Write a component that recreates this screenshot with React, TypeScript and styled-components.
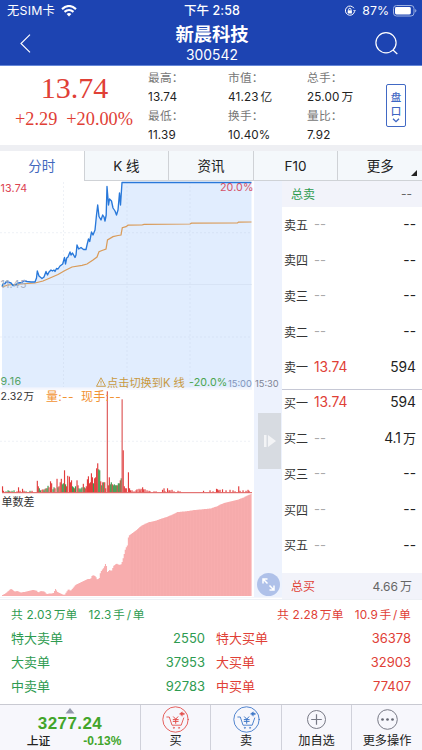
import React from "react";
import styled, { createGlobalStyle } from "styled-components";

const Global = createGlobalStyle`
  * { box-sizing: border-box; }
  body { margin: 0; background: #fff; font-family: Inter, "Noto Sans CJK SC", sans-serif; color: #333; }
`;

const GREEN = "#2e9b50";
const RED = "#e04036";

const Screen = styled.main`
  width: 422px; height: 750px; overflow: hidden;
  display: flex; flex-direction: column; background: #fff; white-space: nowrap;
`;
const Header = styled.header`
  height: 66px; flex: none; background: #1d44b2; color: #fff;
  border-bottom: 1px solid #6587d8; display: flex; flex-direction: column;
`;
const StatusBar = styled.div`
  height: 22px; display: grid; grid-template-columns: 1fr auto 1fr; align-items: center;
  padding: 0 5px 0 7px; font-size: 12.3px; line-height: 22px;
`;
const StatusLeft = styled.div`display: flex; align-items: center; gap: 6px; letter-spacing: 0.25px;`;
const StatusTime = styled.div`font-weight: 500; font-size: 12.5px; letter-spacing: 0.1px;`;
const StatusRight = styled.div`display: flex; align-items: center; justify-content: flex-end; gap: 4px; span { margin-left: 2px; }`;
const TitleBar = styled.div`flex: 1; display: flex; align-items: center; justify-content: space-between; padding: 0 24px 0 20px;`;
const Title = styled.div`text-align: center; margin: 0 0 0 18px;`;
const StockName = styled.div`font-size: 18.3px; font-weight: 700; line-height: 24px;`;
const StockCode = styled.div`font-size: 13.8px; line-height: 19px; letter-spacing: 0.1px;`;

const Quote = styled.section`height: 79px; flex: none; display: flex;`;
const PriceBox = styled.div`
  width: 148px; text-align: center; color: ${RED};
  font-family: "Liberation Serif", serif;
`;
const Price = styled.div`font-size: 30px; line-height: 34px; margin: 5px 0 0 1px;`;
const Change = styled.div`font-size: 18.3px; line-height: 22px; margin-top: 3px; display: flex; gap: 9px; justify-content: center;`;
const Stats = styled.dl`margin: 3px 0 0; display: grid; grid-template-columns: 80px 79px 79px; grid-auto-rows: 38px;`;
const Stat = styled.div`
  font-size: 11.7px; line-height: 18.5px;
  dt { color: #777; letter-spacing: 0.2px; }
  dd { margin: 0; color: #222; display: flex; align-items: baseline; gap: 2px; letter-spacing: 0.15px; }
`;
const PanButton = styled.button`
  width: 20px; height: 43px; margin: 18px 0 0 0; padding: 5px 0 0; border: 1px solid #4169c4; border-radius: 2px;
  background: #fff; color: #3e66c3; font: 500 10.5px/14px "Noto Sans CJK SC", sans-serif;
  display: flex; flex-direction: column; align-items: center;
`;

const Tabs = styled.nav`
  height: 36px; flex: none; border-top: 6px solid #eeeff3; display: flex; box-shadow: inset 0 1px #dcdfe4;
`;
const Tab = styled.button<{ $active?: boolean }>`
  flex: 1; border: 0; padding: 0; position: relative; font: 400 13.5px/30px Inter, "Noto Sans CJK SC", sans-serif;
  color: ${(p) => (p.$active ? "#4268bd" : "#222")};
  background: ${(p) => (p.$active ? "#fff" : "#f4f8fb")};
  border-left: ${(p) => (p.$active ? "0" : "1px solid #cfd2d6")};
  border-bottom: ${(p) => (p.$active ? "0" : "1px solid #cfd2d6")};
`;
const Corner = styled.i`
  position: absolute; right: 5px; bottom: 4px; border: solid transparent;
  border-width: 0 0 6px 6px; border-bottom-color: #222;
`;

const Market = styled.section`height: 417px; flex: none; display: flex; border-bottom: 1px solid #f4f6fb;`;
const Charts = styled.div`width: 254px; position: relative; svg { display: block; }`;
const Label = styled.span<{ $x: number; $y: number; $size: number; $color: string; $ls?: number }>`
  position: absolute; left: ${(p) => p.$x}px; top: ${(p) => p.$y - 9}px; line-height: 18px;
  font-size: ${(p) => p.$size}px; color: ${(p) => p.$color}; letter-spacing: ${(p) => p.$ls ?? 0}px;
  display: flex; align-items: baseline; gap: 1px;
`;
const Strip = styled.aside`
  width: 28px; background: #edf2fd; display: flex; flex-direction: column; align-items: center; justify-content: space-between;
  padding: 232px 0 1px;
`;
const Handle = styled.button`
  width: 23px; height: 56px; padding: 0; border: 0; background: #d7dbe1; align-self: flex-end; margin-right: 1px;
  display: flex; align-items: center; justify-content: center;
`;
const Expand = styled.button`
  width: 23px; height: 23px; padding: 0; border: 0; border-radius: 50%; background: #afc1e9; margin-left: 1px;
  display: flex; align-items: center; justify-content: center;
`;
const Book = styled.div`width: 140px;`;
const Total = styled.div<{ $buy?: boolean }>`
  height: ${(p) => (p.$buy ? 26 : 25.5)}px; background: #f2f3fa; display: flex; justify-content: space-between; align-items: center;
  padding: 0 10px 0 9px; font-size: 12px; color: #666;
  b { font-weight: 400; color: ${(p) => (p.$buy ? RED : GREEN)}; }
  > span { display: flex; align-items: baseline; gap: 2px; }
`;
const Side = styled.div<{ $buy?: boolean }>`
  ${(p) => (p.$buy ? "margin-top: -5px; height: 188px;" : "height: 183px; border-bottom: 1px solid #c6c8d5;")}
`;
const Level = styled.div<{ $empty: boolean }>`
  height: 35.6px; display: grid; grid-template-columns: 30px 1fr auto; align-items: center; padding: 0 6px 0 2px;
  font-size: 12px; color: #333;
  em { font-style: normal; font-size: ${(p) => (p.$empty ? 13 : 13.8)}px; color: ${(p) => (p.$empty ? "#aaa" : RED)}; }
  strong { font-weight: 400; font-size: 13.8px; color: #222; display: flex; align-items: baseline; gap: 2px; line-height: 20px; }
  strong span + span { font-size: 13px; }
`;

const Flow = styled.section`
  height: 105px; margin-top: 1px; flex: none; border-top: 1px solid #edf0f5; display: grid; grid-template-columns: 1fr 1fr;
`;
const FlowSide = styled.div<{ $buy?: boolean }>`
  color: ${(p) => (p.$buy ? RED : GREEN)};
  padding: ${(p) => (p.$buy ? "6px 11px 0 5px" : "6px 6px 0 11px")};
`;
const FlowSum = styled.div<{ $buy?: boolean }>`
  display: flex; gap: 11px; justify-content: ${(p) => (p.$buy ? "flex-end" : "flex-start")};
  font-size: 11.8px; line-height: 18px; margin-bottom: 2px; letter-spacing: 0.15px;
`;
const Phrase = styled.span`display: flex; align-items: baseline; gap: 1.6px;`;
const FlowRow = styled.div`
  display: flex; justify-content: space-between; font-size: 13px; line-height: 24.2px;
`;

const Footer = styled.footer`
  height: 46px; flex: none; border-top: 1px solid #c9cad2; background: #f7f7fc; display: grid; grid-template-columns: 140px 70px 71px 70px 71px;
`;
const Action = styled.button`
  border: 0; border-left: 1px solid #d0d1da; background: transparent; padding: 0; color: #222;
  font: 400 12.2px/15px Inter, "Noto Sans CJK SC", sans-serif;
  display: flex; flex-direction: column; align-items: center; justify-content: flex-start;
  svg { display: block; flex: none; margin-top: 1px; }
`;
const Index = styled.div`
  display: flex; flex-direction: column; align-items: center; font-family: "Liberation Sans", "Noto Sans CJK SC", sans-serif; font-weight: 700; color: #42a52b;
  svg { display: block; margin-top: 3px; }
`;
const IndexValue = styled.div`font-size: 17px; line-height: 18px; margin-top: 1px; letter-spacing: 0.4px;`;
const IndexRow = styled.div`
  display: flex; gap: 33px; font-size: 12px; line-height: 17px; margin: 0 0 0 8px;
  span { color: #222; font-weight: 500; font-size: 11.8px; }
`;

const PRICE: [number, number][] = [
  [2, 286.5], [3, 284], [5, 283.5], [6.5, 281.5], [8, 282], [11, 283], [13, 285.5], [15, 285.5], [18, 283], [22, 282.5], [24, 280.5], [27, 281.5], [31, 282],
  [35, 282], [36.5, 278], [37.3, 271], [39, 276], [42, 278.5], [44, 277], [46, 271.5], [47.5, 275], [49, 272], [51, 270], [52.5, 271], [54, 270], [55, 271.5],
  [56.5, 268.5], [58, 269], [60, 266], [62.7, 264], [64.5, 257.5], [65.5, 264], [66.7, 258], [68, 257], [70, 252], [71, 255], [72.5, 253], [75, 257.5],
  [76, 255], [77, 245], [78.7, 249], [81, 247.5], [83.5, 249.5], [86, 249.5], [87, 245], [88.5, 239], [89.7, 241.5], [91.5, 232], [93, 235], [95, 230],
  [96.5, 215], [97.7, 205], [99, 216.5], [101, 220], [102.7, 215], [104, 217], [105, 221], [106.2, 215], [107, 186.5], [108.5, 205], [109.5, 199],
  [111.5, 201], [113, 208], [115, 211], [116.5, 215], [118, 210], [119.5, 193], [120.5, 205], [122, 182.5], [251.5, 182.5],
];
const AVERAGE: [number, number][] = [
  [2, 287], [8, 285], [20, 284], [35, 283], [43, 281], [50, 278], [58, 274.5], [65, 270.5], [72, 267], [82, 265.3], [87, 264], [93, 260], [97, 257], [99, 251.7],
  [102, 250.5], [106, 249], [107.5, 240], [113, 236.7], [118, 235.5], [121, 235], [122.3, 227.7], [126, 226.7], [128, 225.2], [142, 225], [144, 224.3],
  [190, 224], [191.5, 223.1], [237.5, 223], [238.5, 222.1], [251.5, 222],
];
// Minute volume as [x, height, g = falling].
const VOLUME: [number, number, string?][] = [
  [2.5, 6], [3.5, 1.5], [6, 1, "g"], [8, 2, "g"], [9, 1.5, "g"], [10, 1], [12, 1.5, "g"], [14, 2, "g"], [17, 1], [18.5, 5], [20, 1.5], [22.5, 3.5], [24, 1.5], [26, 1, "g"],
  [30, 1.5, "g"], [32, 1.5], [37.3, 11.5], [38.3, 6], [39.3, 4, "g"], [40.5, 2, "g"], [42, 2.5], [43, 3], [44, 2, "g"], [45, 3.5, "g"], [46, 4], [47, 4, "g"], [48, 6.5, "g"],
  [49, 5], [50.5, 11], [51.6, 9], [53, 3, "g"], [54, 5, "g"], [55, 4], [57, 13.5], [58, 5, "g"], [59, 6], [60.2, 10], [61.3, 13.5], [62.3, 8, "g"], [63.3, 9, "g"],
  [64.5, 22], [65.5, 8, "g"], [66.5, 6], [67.7, 16.5], [69.4, 15.7], [70.5, 10], [71.5, 12], [72.5, 6, "g"], [73.5, 5, "g"], [74.5, 4], [75.5, 6, "g"], [77, 12],
  [78, 7], [79, 4, "g"], [80, 3, "g"], [81, 4, "g"], [82, 5, "g"], [83.3, 8.5], [84.3, 5, "g"], [85.3, 4], [86.3, 6], [87.4, 13], [88.4, 16], [89.5, 9], [90.5, 10],
  [91.4, 19], [92.4, 15], [93.4, 9, "g"], [94.6, 14], [95.6, 15], [96.6, 24], [97.7, 29], [98.7, 23, "g"], [99.7, 22, "g"], [100.7, 11], [101.7, 7, "g"], [102.7, 10],
  [103.7, 10, "g"], [104.7, 10], [105.7, 4], [107.3, 101], [108.3, 7], [109.3, 15], [110.3, 8, "g"], [111.3, 10, "g"], [112.3, 8], [113.3, 7, "g"], [114.3, 8, "g"],
  [115.3, 7, "g"], [116.3, 7, "g"], [117.3, 7], [118.3, 9, "g"], [119.3, 9, "g"], [120.3, 12], [121.2, 14, "g"], [122.1, 93], [123.2, 42], [124.3, 6], [125.3, 4],
  [126.3, 4], [128.4, 20], [129.5, 4], [130.5, 2], [132, 2], [134, 1], [136, 2], [137, 3], [139, 3.5], [140, 2], [141, 3.5], [142.6, 5], [143.6, 3], [145, 3], [147, 2],
  [149, 1.5], [150, 1], [154, 1], [156, 1], [162.5, 2.5], [164, 4], [165, 1], [167.5, 4], [169, 2], [170, 2], [172, 2.5], [174, 1], [178, 1.5], [180, 1],
  [203.5, 1.5], [210, 2], [213, 1], [216.5, 3.5], [217.6, 3], [218.7, 2], [220, 2.5], [222.5, 3], [226, 2], [230, 2.5], [233, 2], [235, 1], [238.7, 6], [240, 1.5],
  [243, 2], [246, 1.5], [248, 2.5], [249, 1.5],
];
const ORDERS: [number, number][] = [
  [2, 595], [4, 594], [6, 592.5], [8, 591], [10, 589], [12, 589.5], [14, 591.5], [17, 591], [20, 592.5], [24, 592], [28, 591], [32, 590], [36, 590.5], [38, 592.5],
  [40, 591], [44, 591.5], [46, 594], [50, 593.5], [53, 593], [55, 589], [57, 592], [60, 593.5], [64, 595], [66, 592], [68, 589], [70, 591], [72, 588.5], [75, 585],
  [80, 582.5], [84, 580.5], [87, 579], [90, 579], [92, 575], [95, 576], [97, 580], [99, 577.5], [100, 572], [103, 568], [105, 564], [106, 566], [107, 572], [109, 570],
  [111, 571], [113, 566], [116, 563.5], [119, 565], [121, 564], [123, 557], [125, 548.5], [127, 545], [128, 536], [132, 533], [136, 530], [140, 526.5], [144, 524],
  [149, 522], [154, 521], [160, 519], [166, 517], [171, 515], [177, 512], [184, 511.5], [194, 510], [210, 508.5], [216, 506.5], [220, 504.5], [224, 502.8],
  [232, 501], [238, 499.5], [243, 497.5], [248, 495], [252, 493.5],
];

const TOP = 181;
const toPath = (pts: [number, number][]) => pts.map(([x, y], i) => `${i ? "L" : "M"}${x} ${y}`).join(" ");
const valueAt = (x: number) => {
  const i = Math.max(1, ORDERS.findIndex((p) => p[0] >= x));
  const [x0, y0] = ORDERS[i - 1];
  const [x1, y1] = ORDERS[i];
  return y0 + ((x - x0) / (x1 - x0)) * (y1 - y0);
};
const stepPath = Array.from({ length: 240 }, (_, i) => {
  const x = 2 + i * 1.04;
  return `V${valueAt(x).toFixed(1)}H${(x + 1.04).toFixed(2)}`;
}).join("");

const PlotArea = () => (
  <svg width="254" height="416" viewBox={`0 ${TOP} 254 416`}>
    <path d={`${toPath(PRICE)} V387.7 H2 Z`} fill="#e1edfe" />
    <rect x="0" y="387.7" width="252" height="2" fill="#f4f6fd" />
    <g stroke="#b9c4da" strokeOpacity=".3" strokeWidth=".8" fill="none">
      <path d="M0 232.7H252M0 337H252M63.5 182V387M127 182V387M190 182V387M0 441.3H252" strokeDasharray="2 2" />
      <path d="M0 284.5H252" />
    </g>
    <path d={toPath(AVERAGE)} fill="none" stroke="#d99b59" strokeWidth="1.25" />
    <path d={toPath(PRICE)} fill="none" stroke="#2878da" strokeWidth="1.35" strokeLinejoin="round" />
    {VOLUME.map(([x, h, dir], i) => (
      <rect key={i} x={x - 0.55} y={492.3 - h} width="1.15" height={h} fill={dir ? "#3d9a4d" : h > 80 ? "#dd5656" : "#e23c3c"} />
    ))}
    <path d="M2 492.7H252" stroke="#dd5454" strokeWidth="1" />
    <path d={`M2 596${stepPath}V596Z`} fill="#f8adae" />
    <g stroke="#f3a1a3" strokeWidth=".5" opacity=".5">
      {Array.from({ length: 40 }, (_, i) => 132 + i * 3).map((x) => <path key={x} d={`M${x} ${valueAt(x) + 1}V596`} />)}
    </g>
  </svg>
);

const CartIcon = ({ color }: { color: string }) => (
  <svg width="27" height="27" viewBox="0 0 27 27" fill="none" stroke={color} strokeLinecap="round" strokeLinejoin="round">
    <circle cx="13.5" cy="13.5" r="12.7" strokeWidth=".9" />
    <path d="M4.8 11H7.3L10 19.2H19.2L21.7 12" strokeWidth=".9" />
    <path d="M11.5 10.8L13.7 13.2L15.9 10.8M13.7 13.2V17.4M11.2 13.6H16.2M11.2 15.4H16.2" strokeWidth="1" />
    <path d="M17.6 7.8L20.3 5.8V7L22.3 7.2V8.6L20.3 8.8V9.9Z" fill={color} strokeWidth=".4" />
    <circle cx="11.8" cy="21.8" r=".65" fill={color} strokeWidth=".4" />
    <circle cx="17" cy="21.8" r=".65" fill={color} strokeWidth=".4" />
  </svg>
);

// A figure with its Chinese unit set slightly apart.
const Amount = ({ text }: { text: string }) => {
  const m = /^([\d.]+)([亿万])$/.exec(text);
  return m ? <><span>{m[1]}</span><span>{m[2]}</span></> : <>{text}</>;
};

const Summary = ({ total, average, buy }: { total: string; average: string; buy?: boolean }) => (
  <FlowSum $buy={buy}>
    <Phrase><span>共 {total}</span><span>万单</span></Phrase>
    <Phrase><span>{average}</span><span>手</span><span>/</span><span>单</span></Phrase>
  </FlowSum>
);

const STATS = [["最高：", "13.74"], ["市值：", "41.23亿"], ["总手：", "25.00万"], ["最低：", "11.39"], ["换手：", "10.40%"], ["量比：", "7.92"]];
const SELL = [["卖五", "--", "--"], ["卖四", "--", "--"], ["卖三", "--", "--"], ["卖二", "--", "--"], ["卖一", "13.74", "594"]];
const BUY = [["买一", "13.74", "594"], ["买二", "--", "4.1万"], ["买三", "--", "--"], ["买四", "--", "--"], ["买五", "--", "--"]];
const SELL_FLOW = [["特大卖单", "2550"], ["大卖单", "37953"], ["中卖单", "92783"]];
const BUY_FLOW = [["特大买单", "36378"], ["大买单", "32903"], ["中买单", "77407"]];
const levels = (rows: string[][]) => rows.map(([name, price, amount]) => (
  <Level key={name} $empty={price === "--"}><span>{name}</span><em>{price}</em><strong><Amount text={amount} /></strong></Level>
));
const flows = (rows: string[][]) => rows.map(([name, count]) => (
  <FlowRow key={name}><span>{name}</span><span>{count}</span></FlowRow>
));

export default function App() {
  return (
    <Screen>
      <Global />
      <Header>
        <StatusBar>
          <StatusLeft>无SIM卡
            <svg width="16" height="12" viewBox="0 0 16 12" fill="none" stroke="#fff" strokeWidth="2.1">
              <path d="M1 4.1Q8-2.1 15 4.1M3.5 6.9Q8 3.1 12.5 6.9" /><path d="M5.6 8.9Q8 7 10.4 8.9L8 11.4Z" fill="#fff" stroke="none" />
            </svg>
          </StatusLeft>
          <StatusTime>下午 2:58</StatusTime>
          <StatusRight>
            <svg width="12" height="12" viewBox="0 0 12 12" fill="none" stroke="#fff" strokeWidth="1">
              <path d="M9.9 3.2A4.6 4.6 0 1 0 10.4 7" /><path d="M9 5.2H12L10.5 7.1Z" fill="#fff" stroke="none" />
              <rect x="3.7" y="5.3" width="4.2" height="3.2" fill="#fff" stroke="none" /><path d="M4.6 5.4V4.5a1.2 1.2 0 0 1 2.4 0V5.4" />
            </svg>
            <span>87%</span>
            <svg width="24" height="12" viewBox="0 0 24 12">
              <rect x=".5" y=".5" width="20.5" height="10.5" rx="3" fill="none" stroke="#9db1e2" />
              <rect x="2" y="2" width="15.8" height="7.5" rx="1.4" fill="#fff" /><path d="M22.2 4V7.6Q23.4 7 23.4 5.8T22.2 4" fill="#9db1e2" />
            </svg>
          </StatusRight>
        </StatusBar>
        <TitleBar>
          <svg width="11" height="19" viewBox="0 0 11 19" fill="none" stroke="#fff" strokeWidth="1.15"><path d="M10 .7L1 9.5L10 18.3" /></svg>
          <Title><StockName>新晨科技</StockName><StockCode>300542</StockCode></Title>
          <svg width="23" height="23" viewBox="0 0 23 23" fill="none" stroke="#fff" strokeWidth="1.2"><circle cx="11" cy="10.8" r="10.1" /><path d="M18 18L22.3 22" /></svg>
        </TitleBar>
      </Header>

      <Quote>
        <PriceBox>
          <Price>13.74</Price>
          <Change><span>+2.29</span><span>+20.00%</span></Change>
        </PriceBox>
        <Stats>{STATS.map(([k, v]) => <Stat key={k}><dt>{k}</dt><dd><Amount text={v} /></dd></Stat>)}</Stats>
        <PanButton>
          <span>盘</span><span>口</span>
          <svg width="8" height="5" viewBox="0 0 8 5" fill="none" stroke="#3e66c3" strokeWidth="1.3"><path d="M1 .8L4 3.7L7 .8" /></svg>
        </PanButton>
      </Quote>

      <Tabs>
        <Tab $active>分时</Tab><Tab>K 线</Tab><Tab>资讯</Tab><Tab>F10</Tab><Tab>更多<Corner /></Tab>
      </Tabs>

      <Market>
        <Charts>
          <PlotArea />
          <Label $x={0.5} $y={7.5} $size={10.7} $color="#dc4451" $ls={0.2}>13.74</Label>
          <Label $x={220} $y={7} $size={10.7} $color="#d5536a" $ls={0.1}>20.0%</Label>
          <Label $x={0.5} $y={104} $size={10.7} $color="#a5b0c3" $ls={0.2}>11.45</Label>
          <Label $x={0.5} $y={201} $size={10.7} $color="#55a365" $ls={0.4}>9.16</Label>
          <Label $x={96} $y={202} $size={11.2} $color="#c9993e">
            <svg width="10" height="10" viewBox="0 0 10 10" fill="none" stroke="#c9993e" strokeWidth=".9" strokeLinejoin="round"><path d="M5 .8L9.5 9.3H.5ZM5 3.8V6.6M5 7.4V8.2" /></svg>
            <span>点击切换到K 线</span>
          </Label>
          <Label $x={189} $y={202} $size={10.7} $color="#4ba54e" $ls={0.15}>-20.0%</Label>
          <Label $x={228} $y={202.5} $size={9.3} $color="#8494ba">15:00</Label>
          <Label $x={0.5} $y={216} $size={10.5} $color="#333"><Amount text="2.32万" /></Label>
          <Label $x={46} $y={216} $size={12} $color="#f19333" $ls={0.3}>量:--</Label>
          <Label $x={81} $y={216} $size={12} $color="#f19333" $ls={0.3}>现手:--</Label>
          <Label $x={1.5} $y={320.5} $size={11} $color="#333">单数差</Label>
          <Label $x={255} $y={202.5} $size={9.3} $color="#7e8494">15:30</Label>
        </Charts>
        <Strip>
          <Handle><svg width="12" height="12" viewBox="0 0 12 12" fill="#f3f4f6"><path d="M0 0H2.5V12H0ZM4 0L12 6L4 12Z" /></svg></Handle>
          <Expand>
            <svg width="13" height="13" viewBox="0 0 13 13" fill="none" stroke="#fff" strokeWidth="1.5"><path d="M5.5 1H1V5.5M1.3 1.3L5.5 5.5M7.5 12H12V7.5M11.7 11.7L7.5 7.5" /></svg>
          </Expand>
        </Strip>
        <Book>
          <Total><b>总卖</b><span>--</span></Total>
          <Side>{levels(SELL)}</Side>
          <Side $buy>{levels(BUY)}</Side>
          <Total $buy><b>总买</b><span><Amount text="4.66万" /></span></Total>
        </Book>
      </Market>

      <Flow>
        <FlowSide>
          <Summary total="2.03" average="12.3" />
          {flows(SELL_FLOW)}
        </FlowSide>
        <FlowSide $buy>
          <Summary total="2.28" average="10.9" buy />
          {flows(BUY_FLOW)}
        </FlowSide>
      </Flow>

      <Footer>
        <Index>
          <svg width="10" height="6" viewBox="0 0 10 6"><path d="M5 0L9.5 5.5H.5Z" fill="#9298a9" /></svg>
          <IndexValue>3277.24</IndexValue>
          <IndexRow><span>上证</span>-0.13%</IndexRow>
        </Index>
        <Action><CartIcon color="#e3504c" />买</Action>
        <Action><CartIcon color="#3f78c8" />卖</Action>
        <Action>
          <svg width="27" height="27" viewBox="0 0 27 27" fill="none" stroke="#777985" strokeWidth="1"><circle cx="13.5" cy="13.5" r="9" /><path d="M8.2 13.5H18.8M13.5 8.2V18.8" strokeWidth="1.2" /></svg>
          加自选
        </Action>
        <Action>
          <svg width="27" height="27" viewBox="0 0 27 27" fill="none" stroke="#777985" strokeWidth="1"><circle cx="13.5" cy="13.5" r="9.8" /><g fill="#666873" stroke="none"><circle cx="8.5" cy="13.5" r="1.35" /><circle cx="13.5" cy="13.5" r="1.35" /><circle cx="18.5" cy="13.5" r="1.35" /></g></svg>
          更多操作
        </Action>
      </Footer>
    </Screen>
  );
}
